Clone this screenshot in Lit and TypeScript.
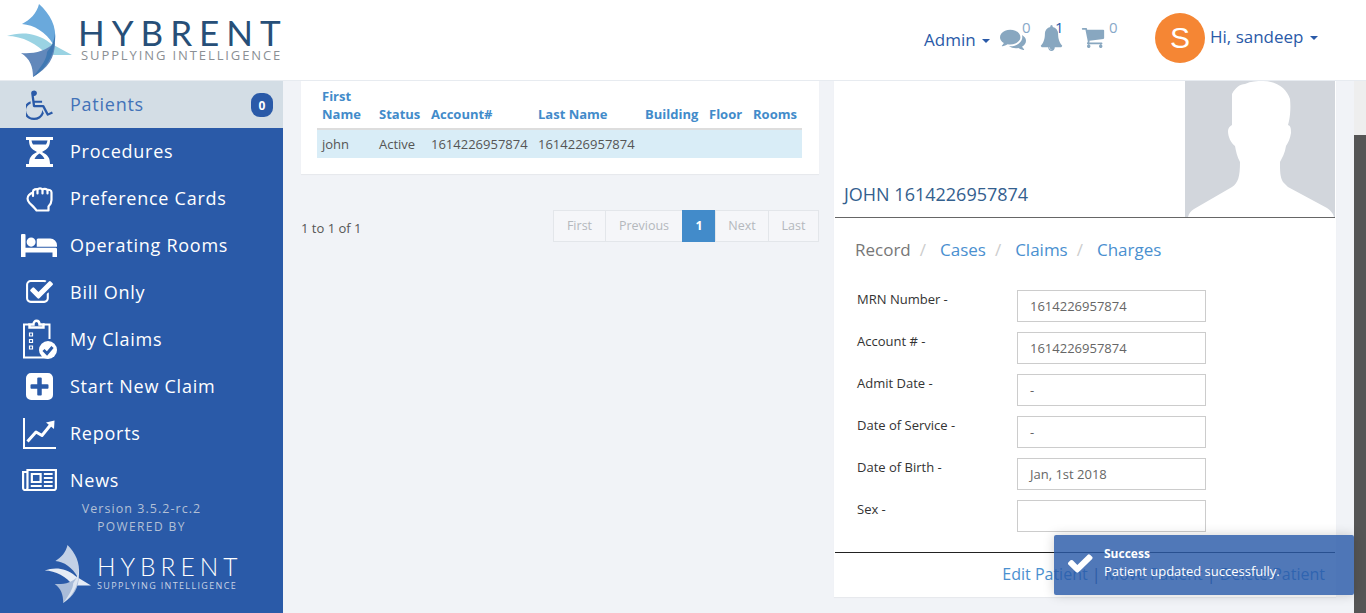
import { LitElement, html, css, svg } from "lit";
import { customElement } from "lit/decorators.js";

const P = {
  comments: "M1408 768q0 139-94 257t-256.5 186.5-353.5 68.5q-86 0-176-16-124 88-278 128-36 9-86 16h-3q-11 0-20.5-8t-11.5-21q-1-3-1-6.5t.5-6.5 2-6l2.5-5 3.5-5.5 4-5 4.5-5 4-4.5q5-6 23-25t26-29.5 22.5-29 25-38.5 20.5-44q-124-72-195-177t-71-224q0-139 94-257t256.5-186.5 353.5-68.5 353.5 68.5 256.5 186.5 94 257zm384 256q0 120-71 224.5t-195 176.5q10 24 20.5 44t25 38.5 22.5 29 26 29.5 23 25q1 1 4 4.5t4.5 5 4 5 3.5 5.5l2.5 5 2 6 .5 6.5-1 6.5q-3 14-13 22t-22 7q-50-7-86-16-154-40-278-128-90 16-176 16-271 0-472-132 58 4 88 4 161 0 309-45t264-129q125-92 192-212t67-254q0-77-23-152 129 71 204 178t75 230z",
  bell: "M912 1696q0-16-16-16-59 0-101.5-42.5t-42.5-101.5q0-16-16-16t-16 16q0 73 51.5 124.5t124.5 51.5q16 0 16-16zm816-288q0 52-38 90t-90 38h-448q0 106-75 181t-181 75-181-75-75-181h-448q-52 0-90-38t-38-90q50-42 91-88t85-119.5 74.5-158.5 50-206 19.5-260q0-152 117-282.5t307-158.5q-8-19-8-39 0-40 28-68t68-28 68 28 28 68q0 20-8 39 190 28 307 158.5t117 282.5q0 139 19.5 260t50 206 74.5 158.5 85 119.5 91 88z",
  cart: "M704 1536q0 52-38 90t-90 38-90-38-38-90 38-90 90-38 90 38 38 90zm896 0q0 52-38 90t-90 38-90-38-38-90 38-90 90-38 90 38 38 90zm128-1088v512q0 24-16.5 42.5t-40.5 21.5l-1044 122q13 60 13 70 0 16-24 64h920q26 0 45 19t19 45-19 45-45 19h-1024q-26 0-45-19t-19-45q0-11 8-31.5t16-36 21.5-40 15.5-29.5l-177-823h-204q-26 0-45-19t-19-45 19-45 45-19h256q16 0 28.5 6.5t19.5 15.5 13 24.5 8 26 5.5 29.5 4.5 26h1201q26 0 45 19t19 45z",
  wheelchair: "M1023 1187l102 204q-58 179-210 290t-339 111q-156 0-288.5-77.5t-210-210-77.5-288.5q0-181 104.5-330t274.5-211l17 131q-122 54-195 165.5t-73 244.5q0 185 131.5 316.5t316.5 131.5q126 0 232.5-65t165-175.5 49.5-236.5zm548 100l58 114-256 128q-13 7-29 7-40 0-57-35l-239-477h-472q-24 0-42.5-16.5t-21.5-40.5l-96-779q-2-17 6-42 14-51 57-82.5t97-31.5q66 0 113 47t47 113q0 69-52 117.5t-120 41.5l37 289h423v128h-407l16 128h455q40 0 57 35l228 455z",
  bed: "M256 1024h1728q26 0 45 19t19 45v448h-256v-256h-1536v256h-256v-1216q0-26 19-45t45-19h128q26 0 45 19t19 45v704zm576-320q0-106-75-181t-181-75-181 75-75 181 75 181 181 75 181-75 75-181zm1216 256v-64q0-159-112.5-271.5t-271.5-112.5h-704q-26 0-45 19t-19 45v384h1152z",
  checkSq: "M1472 930v318q0 119-84.5 203.5t-203.5 84.5h-832q-119 0-203.5-84.5t-84.5-203.5v-832q0-119 84.5-203.5t203.5-84.5h832q63 0 117 25 15 7 18 23 3 17-9 29l-49 49q-10 10-23 10-3 0-9-2-23-6-45-6h-832q-66 0-113 47t-47 113v832q0 66 47 113t113 47h832q66 0 113-47t47-113v-254q0-13 9-22l64-64q10-10 23-10 6 0 12 3 20 8 20 29zm231-489l-814 814q-24 24-57 24t-57-24l-430-430q-24-24-24-57t24-57l110-110q24-24 57-24t57 24l263 263 647-647q24-24 57-24t57 24l110 110q24 24 24 57t-24 57z",
  plusSq: "M1408 960v-128q0-26-19-45t-45-19h-320v-320q0-26-19-45t-45-19h-128q-26 0-45 19t-19 45v320h-320q-26 0-45 19t-19 45v128q0 26 19 45t45 19h320v320q0 26 19 45t45 19h128q26 0 45-19t19-45v-320h320q26 0 45-19t19-45zm256-544v960q0 119-84.5 203.5t-203.5 84.5h-960q-119 0-203.5-84.5t-84.5-203.5v-960q0-119 84.5-203.5t203.5-84.5h960q119 0 203.5 84.5t84.5 203.5z",
  news: "M1024 512h-384v384h384v-384zm128 640v128h-640v-128h640zm0-768v640h-640v-640h640zm640 768v128h-512v-128h512zm0-256v128h-512v-128h512zm0-256v128h-512v-128h512zm0-256v128h-512v-128h512zm-1536 960v-960h-128v960q0 26 19 45t45 19 45-19 19-45zm1664 0v-1088h-1536v1088q0 33-11 64h1483q26 0 45-19t19-45zm128-1216v1216q0 80-56 136t-136 56h-1664q-80 0-136-56t-56-136v-1088h256v-128h1792z",
  check: "M1671 566q0 40-28 68l-724 724-136 136q-28 28-68 28t-68-28l-136-136-362-362q-28-28-28-68t28-68l136-136q28-28 68-28t68 28l294 295 656-657q28-28 68-28t68 28l136 136q28 28 28 68z",
};

const fa = (d: string, vb: string, w: number, h: number) =>
  html`<svg width=${w} height=${h} viewBox=${vb} preserveAspectRatio="none"><path fill="currentColor" d=${d}></path></svg>`;

const hourglass = html`<svg width="27" height="30" viewBox="0 0 27 30">
  <path fill="currentColor" d="M0 0h27v3H0zM0 27h27v3H0zM3 3h21c0 6-2 9-8 12 6 3 8 6 8 12H3c0-6 2-9 8-12C5 12 3 9 3 3z"></path>
  <path fill="#2a5aa8" d="M5.500 3.500h16c-.3 1.500-.8 3-1.500 4H7c-.7-1-1.200-2.500-1.500-4zM13.500 16.500c-2 1-4 3-5 5.500h10c-1-2.500-3-4.500-5-5.500z"></path>
</svg>`;

const fist = html`<svg class="fist" width="27" height="25" viewBox="0 0 27 25" fill="none" stroke="currentColor" stroke-width="2.200" stroke-linejoin="round" stroke-linecap="round">
  <path d="M7 5.500V4.500C7 2.500 10.500 1.500 11.500 2.500 12.500 1 15.500 1 16.500 2.500 17.500 1.500 20.500 1.500 21.500 3 23 2.500 25.500 3 25.500 5.500V13C25.500 16 24 18 22.500 19.500V23.500H10.500C9 21 6 18.500 3.500 16 1 13.500 1 10 3 8 4 7 5.500 6 7 5.500Z"></path>
  <path d="M11.500 2.500V6.500M16.500 2.500V6.500M21.500 3V6.500M7 5.500V9"></path>
</svg>`;

const clipboard = html`<svg width="35" height="41" viewBox="0 0 35 41">
  <path fill="none" stroke="currentColor" stroke-width="2" d="M7.500 5.500H2v33h24M21 5.500h6.500V20"></path>
  <path fill="none" stroke="currentColor" stroke-width="2.400" d="M7.500 8.500V5.500h4c0-5 6-5 6 0h4v3z"></path>
  <path fill="none" stroke="currentColor" stroke-width="1.200" d="M7.500 14h3v3h-3zM7.500 20.500h3v3h-3zM7.500 27h3v3h-3z"></path>
  <circle cx="26" cy="31" r="9" fill="currentColor"></circle>
  <path fill="none" stroke="#2a5aa8" stroke-width="3" d="M21.500 31l3.500 3.500 5.500-6.500"></path>
</svg>`;

const chart = html`<svg width="33" height="31" viewBox="0 0 33 31">
  <path fill="none" stroke="currentColor" stroke-width="2" d="M1 0V30H33"></path>
  <path fill="none" stroke="currentColor" stroke-width="3" stroke-linejoin="round" d="M4.500 23.500L13 14l6 3.500L27.500 7"></path>
  <path fill="currentColor" d="M23 4.500L31.500 2.500 31 11z"></path>
</svg>`;

const silhouette = html`<svg width="150" height="136" viewBox="0 0 150 136" class="photo">
  <rect width="150" height="136" fill="#d2d6dc"></rect>
  <path fill="#fff" d="M3 136C4 132 6 130 9 128L47 106C53 102 55 96 55 81 52 76 51 70 50 65 46 62 43 56 43 50 43 47 45 45 47 44V13C50 7 55 3 60 3 66 0 72 0 78 0 92 0 102 8 105 18 106 27 105 38 103 44 106 45 106 48 106 52 105 58 103 62 101 65 100 72 97 77 95 81 95 90 95 96 98 101L103 106 142 127C146 130 148 132 149 136Z"></path>
</svg>`;

const wing = (a: string, b: string, c: string, d: string) => svg`
  <path fill=${a} d="M39 4C50 14 57 26 55 42L53 44C46 32 34 25 22 24 30 20 37 13 39 4Z"></path>
  <path fill=${b} d="M7 36C20 32 36 32 50 43L72 55C62 55 54 55 47 55 38 44 22 36 7 36Z"></path>
  <path fill=${c} d="M21 53C32 54 46 52 55 42 55 58 48 68 33 77 33 66 30 59 21 53Z"></path>
  <path fill=${d} d="M55 33C56 50 50 66 33 77 42 66 47 58 47 52 50 48 54 44 55 33Z"></path>`;

const NAV = [
  { t: "Patients", i: fa(P.wheelchair, "128 0 1504 1792", 27, 30), active: true },
  { t: "Procedures", i: hourglass },
  { t: "Preference Cards", i: fist },
  { t: "Operating Rooms", i: fa(P.bed, "0 256 2048 1280", 36, 23) },
  { t: "Bill Only", i: fa(P.checkSq, "0 128 1792 1536", 29, 25) },
  { t: "My Claims", i: clipboard },
  { t: "Start New Claim", i: fa(P.plusSq, "128 128 1536 1536", 27, 27) },
  { t: "Reports", i: chart },
  { t: "News", i: fa(P.news, "0 128 2048 1536", 35, 24) },
];

const FIELDS = [
  ["MRN Number -", "1614226957874"],
  ["Account # -", "1614226957874"],
  ["Admit Date -", "-"],
  ["Date of Service -", "-"],
  ["Date of Birth -", "Jan, 1st 2018"],
  ["Sex -", ""],
];

@customElement("app-root")
export class AppRoot extends LitElement {
  static styles = css`
    :host {
      display: block;
      position: relative;
      height: 613px;
      overflow: hidden;
      background: #f1f3f7;
      font-family: "Open Sans", "Liberation Sans", sans-serif;
      color: #555;
    }
    * { box-sizing: border-box; }
    .top {
      height: 81px;
      background: #fff;
      border-bottom: 1px solid #e7ebf0;
      display: flex;
      justify-content: space-between;
    }
    .brand { position: relative; width: 283px; height: 80px; }
    .brand svg { position: absolute; left: 0; top: 0; }
    .brand-text { padding: 11px 0 0 80px; }
    .hyb {
      font-family: Lato, "Open Sans", sans-serif;
      font-weight: 400;
      font-size: 35px;
      line-height: 42px;
      letter-spacing: 7px;
      margin-left: -2px;
      color: #274f78;
      white-space: nowrap;
    }
    .sup {
      font-family: "Open Sans", sans-serif;
      font-size: 13px;
      line-height: 14px;
      letter-spacing: 1.900px;
      color: #8b8f94;
      white-space: nowrap;
      margin: -5px 0 0 1px;
    }
    .tools { width: 450px; padding-left: 8px; color: #2a5aa8; display: flex; align-items: flex-start; }
    .caret {
      display: inline-block;
      width: 0; height: 0;
      border-left: 4.500px solid transparent;
      border-right: 4.500px solid transparent;
      border-top: 4.500px solid currentColor;
      vertical-align: middle;
      margin-left: 2px;
    }
    .lnk { font-size: 17px; line-height: 22px; white-space: nowrap; flex: none; }
    .admin { width: 76px; margin-top: 29px; }
    .hi { margin-top: 26px; margin-left: 5px; }
    .tool { position: relative; flex: none; color: #88a7c0; line-height: 0; }
    .t-msg { width: 40px; padding-top: 28px; }
    .t-bell { width: 41px; padding-top: 25px; }
    .t-cart { width: 74px; padding-top: 28px; }
    .cnt { position: absolute; top: 18px; font-size: 15px; line-height: 18px; color: #88a9c9; }
    .t-msg .cnt { left: 22px; }
    .t-bell .cnt { left: 15px; color: #2a5aa8; }
    .t-cart .cnt { left: 28px; }
    .avatar {
      flex: none;
      margin-top: 13px;
      width: 50px; height: 50px; border-radius: 50%;
      background: #f58634; color: #fff;
      font-family: "Liberation Sans", sans-serif;
      font-size: 30px; line-height: 50px; text-align: center;
    }
    .body { display: flex; height: 532px; }
    aside {
      width: 283px;
      background: #2a5aa8;
      color: #fff;
      flex: none;
      display: flex;
      flex-direction: column;
    }
    .nav {
      flex: none;
      height: 47px;
      display: flex;
      align-items: center;
      position: relative;
      font-size: 18px;
      letter-spacing: .75px;
    }
    .nav .t { padding-bottom: 2px; }
    .nav.active { background: #d3dde5; color: #2a5aa8; }
    .nav.active .t { color: #4272b8; }
    .nav .i { width: 70px; display: flex; justify-content: center; padding-left: 8px; line-height: 0; flex: none; }
    .fist { margin-top: 2px; }
    .badge {
      position: absolute; right: 10px; top: 12px;
      width: 22px; height: 24px; border-radius: 9px;
      background: #2a5aa8; color: #fff;
      font-size: 12px; font-weight: 700; letter-spacing: 0;
      display: flex; align-items: center; justify-content: center;
    }
    .ver {
      flex: none;
      margin-top: -4px;
      text-align: center; color: #b3c0d6; font-size: 12.500px; line-height: 18px;
      letter-spacing: 1.050px;
    }
    .pow { font-size: 12px; letter-spacing: 1.400px; }
    .blogo { position: relative; height: 68px; margin-top: 9px; flex: none; }
    .blogo svg { position: absolute; left: 44px; top: 0; }
    .blogo .txt { padding: 7px 0 0 97px; }
    .blogo .hyb { font-size: 24.500px; line-height: 29px; letter-spacing: 5px; color: #fff; font-weight: 300; margin-left: 0; }
    .blogo .sup { font-size: 9px; line-height: 10px; letter-spacing: 1.350px; color: #c9d4e6; margin: 0; }
    main {
      flex: 1;
      display: flex;
      align-items: flex-start;
      padding-left: 18px;
      gap: 15px;
    }
    .left { width: 518px; flex: none; }
    .card { background: #fff; height: 93px; padding: 0 17px 0 16px; box-shadow: 0 1px 1px rgba(0,0,0,.04); }
    table { border-collapse: collapse; table-layout: fixed; width: 485px; }
    th {
      color: #428bca; font-size: 13px; font-weight: 700; text-align: left;
      padding: 6px 5px 5px; line-height: 18px; vertical-align: bottom;
      border-bottom: 2px solid #ddd;
    }
    td { background: #d9edf7; padding: 5px; height: 28px; line-height: 18px; color: #555; white-space: nowrap; font-size: 13px; }
    .pager { display: flex; justify-content: space-between; align-items: center; margin-top: 36px; height: 32px; }
    .info { font-size: 13px; color: #555; padding-top: 4px; }
    .pages { display: flex; }
    .pages span {
      height: 32px; line-height: 30px; text-align: center; font-size: 12.500px; color: #b4b8bd;
      border: 1px solid #e3e6ea; margin-left: -1px; background: #f5f6f9;
    }
    .pages .on { background: #428bca; color: #fff; border-color: #428bca; font-weight: 700; }
    .right { width: 502px; flex: none; height: 516px; background: #fff; box-shadow: 0 1px 1px rgba(0,0,0,.04); }
    .phead {
      height: 137px; display: flex; justify-content: space-between; align-items: flex-end;
      border-bottom: 1px solid #666; margin-right: 1px; margin-left: 1px;
    }
    .phead h2 { margin: 0 0 11px 9px; font-weight: 400; font-size: 18px; line-height: 24px; color: #34608e; }
    .photo { display: block; }
    .crumbs { padding: 20px 0 0 21px; font-size: 17px; line-height: 24px; color: #4a90d0; display: flex; height: 72px; }
    .crumbs b { font-weight: 400; color: #777; }
    .crumbs i { font-style: normal; color: #ccc; padding: 0 14px 0 9px; }
    .row { display: flex; height: 42px; }
    .row label { width: 183px; padding: 0 0 0 23px; font-size: 13px; font-weight: 500; line-height: 18px; color: #333; }
    .val {
      width: 189px; height: 32px; border: 1px solid #ccc; font-size: 13px; line-height: 30px;
      padding-left: 12px; color: #666; white-space: nowrap;
    }
    .foot {
      margin: 10px 1px 0; border-top: 1px solid #222; padding: 10px 10px 0 0;
      text-align: right; font-size: 16px; line-height: 22px; color: #4a90d0; white-space: nowrap;
    }
    .foot i { font-style: normal; color: #34608e; }
    .sb { width: 12px; margin-left: auto; flex: none; background: #555; }
    .sb div { height: 54px; background: #eee; }
    .toast {
      position: absolute; left: 1054px; top: 535px; width: 300px; height: 60px;
      background: rgba(42, 90, 168, .82); border-radius: 2px; color: #fff;
      box-shadow: 0 0 12px rgba(0,0,0,.18);
      display: flex; align-items: center; padding-bottom: 5px;
    }
    .toast .ck { width: 50px; padding-left: 14px; line-height: 0; flex: none; }
    .toast strong { display: block; font-size: 12px; font-weight: 700; line-height: 18px; }
    .toast span { display: block; font-size: 13px; line-height: 18px; margin-top: -1px; white-space: nowrap; }
  `;

  render() {
    const cols = [57, 52, 107, 107, 64, 44, 54];
    const pages: [string, number, boolean][] = [["First", 53, false], ["Previous", 78, false], ["1", 34, true], ["Next", 54, false], ["Last", 51, false]];
    return html`
      <div class="top">
        <div class="brand">
          <svg width="80" height="80" viewBox="0 0 80 80">${wing("#6aa9dc", "#9ad3e3", "#6288bb", "#3f78b2")}</svg>
          <div class="brand-text">
            <div class="hyb">HYBRENT</div>
            <div class="sup">SUPPLYING INTELLIGENCE</div>
          </div>
        </div>
        <div class="tools">
          <span class="lnk admin">Admin <span class="caret"></span></span>
          <span class="tool t-msg">${fa(P.comments, "0 128 1792 1536", 26, 22)}<span class="cnt">0</span></span>
          <span class="tool t-bell">${fa(P.bell, "0 0 1792 1792", 23, 26)}<span class="cnt">1</span></span>
          <span class="tool t-cart">${fa(P.cart, "0 256 1792 1408", 24, 20)}<span class="cnt">0</span></span>
          <span class="avatar">S</span>
          <span class="lnk hi">Hi, sandeep <span class="caret"></span></span>
        </div>
      </div>
      <div class="body">
        <aside>
          ${NAV.map(
            (n) => html`<div class="nav ${n.active ? "active" : ""}">
              <span class="i">${n.i}</span><span class="t">${n.t}</span>
              ${n.active ? html`<span class="badge">0</span>` : ""}
            </div>`
          )}
          <div class="ver">Version 3.5.2-rc.2<br /><span class="pow">POWERED BY</span></div>
          <div class="blogo">
            <svg width="47" height="58" viewBox="6 4 66 73" preserveAspectRatio="none">${wing("#c3d1e6", "#e6ecf5", "#a9bcd9", "#dde5f1")}</svg>
            <div class="txt">
              <div class="hyb">HYBRENT</div>
              <div class="sup">SUPPLYING INTELLIGENCE</div>
            </div>
          </div>
        </aside>
        <main>
          <section class="left">
            <div class="card">
              <table>
                <colgroup>${cols.map((c) => html`<col style="width:${c}px" />`)}</colgroup>
                <thead><tr>
                  <th>First Name</th><th>Status</th><th>Account#</th><th>Last Name</th><th>Building</th><th>Floor</th><th>Rooms</th>
                </tr></thead>
                <tbody><tr>
                  <td>john</td><td>Active</td><td>1614226957874</td><td>1614226957874</td><td></td><td></td><td></td>
                </tr></tbody>
              </table>
            </div>
            <div class="pager">
              <span class="info">1 to 1 of 1</span>
              <div class="pages">
                ${pages.map(([t, w, on]) => html`<span class=${on ? "on" : ""} style="width:${w}px">${t}</span>`)}
              </div>
            </div>
          </section>
          <section class="right">
            <div class="phead"><h2>JOHN 1614226957874</h2>${silhouette}</div>
            <div class="crumbs"><b>Record</b><i>/</i>Cases<i>/</i>Claims<i>/</i>Charges</div>
            ${FIELDS.map(([l, v]) => html`<div class="row"><label>${l}</label><div class="val">${v}</div></div>`)}
            <div class="foot">Edit Patient <i>|</i> Move Patient <i>|</i> Delete Patient</div>
          </section>
        </main>
        <div class="sb"><div></div></div>
      </div>
      <div class="toast">
        <div class="ck">${fa(P.check, "128 256 1568 1280", 25, 20)}</div>
        <div><strong>Success</strong><span>Patient updated successfully.</span></div>
      </div>
    `;
  }
}
